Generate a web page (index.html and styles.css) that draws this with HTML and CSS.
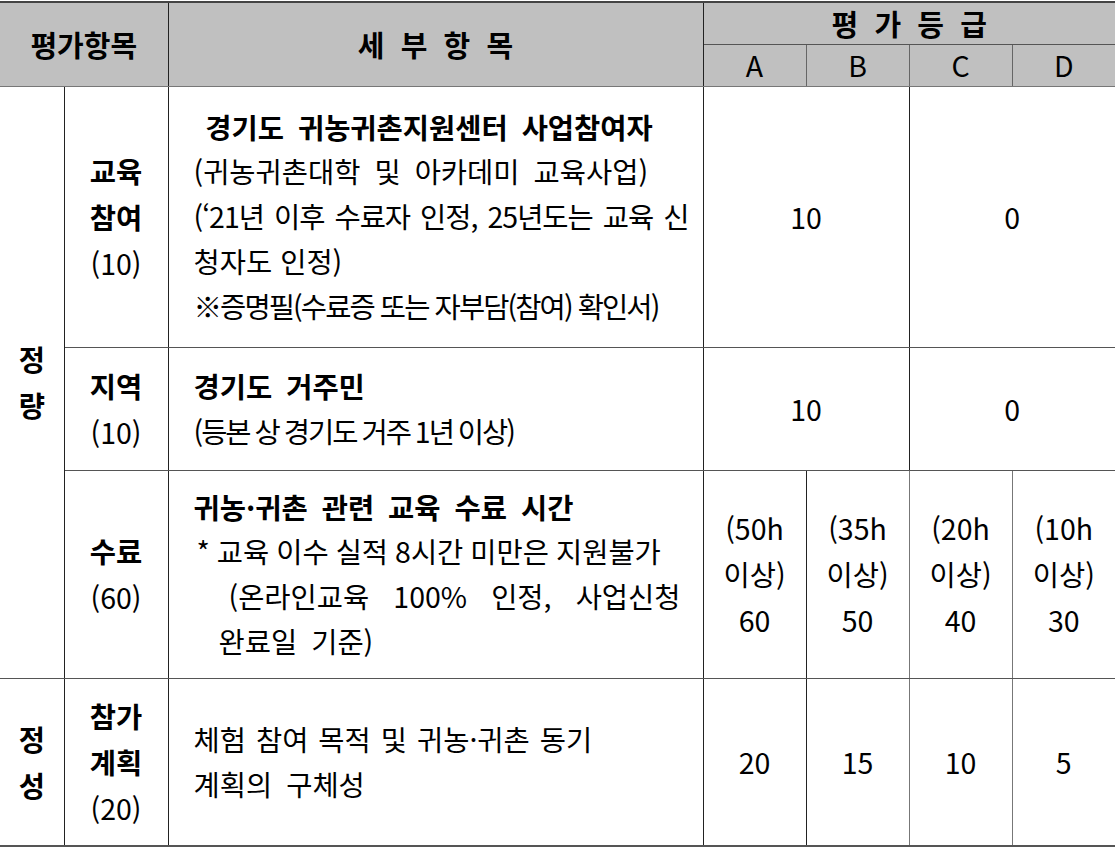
FILE: index.html
```html
<!DOCTYPE html>
<html lang="ko">
<head>
<meta charset="utf-8">
<link rel="stylesheet" href="styles.css">
</head>
<body>
<table class="grid">
  <colgroup>
    <col class="c1"><col class="c2"><col class="c3">
    <col class="cg"><col class="cg"><col class="cg"><col class="cg">
  </colgroup>
  <thead>
    <tr class="h1">
      <th colspan="2" rowspan="2" class="hd">평가항목</th>
      <th rowspan="2" class="hd sp">세 부 항 목</th>
      <th colspan="4" class="hd sp">평 가 등 급</th>
    </tr>
    <tr class="h2">
      <th class="hd g gl">A</th>
      <th class="hd g">B</th>
      <th class="hd g">C</th>
      <th class="hd g">D</th>
    </tr>
  </thead>
  <tbody>
    <tr class="r1">
      <td rowspan="3" class="cat"><div class="vt"><span>정</span><span>량</span></div></td>
      <td class="sub b">교육<br>참여<br><span class="n">(10)</span></td>
      <td class="desc">
        <div class="ln b ctr">경기도 귀농귀촌지원센터 사업참여자</div>
        <div class="ln ws1">(귀농귀촌대학 및 아카데미 교육사업)</div>
        <div class="ln just cond">(‘21년 이후 수료자 인정, 25년도는 교육 신</div>
        <div class="ln">청자도 인정)</div>
        <div class="ln cond2">※증명필(수료증 또는 자부담(참여) 확인서)</div>
      </td>
      <td colspan="2" class="val gl">10</td>
      <td colspan="2" class="val">0</td>
    </tr>
    <tr class="r2">
      <td class="sub b">지역<br><span class="n">(10)</span></td>
      <td class="desc">
        <div class="ln b ws1">경기도 거주민</div>
        <div class="ln tight">(등본 상 경기도 거주 1년 이상)</div>
      </td>
      <td colspan="2" class="val gl">10</td>
      <td colspan="2" class="val">0</td>
    </tr>
    <tr class="r3">
      <td class="sub b">수료<br><span class="n">(60)</span></td>
      <td class="desc">
        <div class="ln b ws1">귀농·귀촌 관련 교육 수료 시간</div>
        <div class="ln star">* 교육 이수 실적 8시간 미만은 지원불가</div>
        <div class="ln ind1 just">(온라인교육 100% 인정, 사업신청</div>
        <div class="ln ind2 ws1">완료일 기준)</div>
      </td>
      <td class="val gl">(50h<br>이상)<br>60</td>
      <td class="val gray">(35h<br>이상)<br>50</td>
      <td class="val gray">(20h<br>이상)<br>40</td>
      <td class="val">(10h<br>이상)<br>30</td>
    </tr>
    <tr class="r4">
      <td class="cat"><div class="vt"><span>정</span><span>성</span></div></td>
      <td class="sub b">참가<br>계획<br><span class="n">(20)</span></td>
      <td class="desc">
        <div class="ln ws2">체험 참여 목적 및 귀농·귀촌 동기</div>
        <div class="ln ws1">계획의 구체성</div>
      </td>
      <td class="val gl">20</td>
      <td class="val gray">15</td>
      <td class="val gray">10</td>
      <td class="val">5</td>
    </tr>
  </tbody>
</table>
</body>
</html>
```

FILE: styles.css
```css
html, body {
  margin: 0;
  padding: 0;
  background: #ffffff;
}
body {
  font-family: "Noto Sans CJK KR", "Noto Sans", sans-serif;
  color: #000;
  padding-top: 1px;
}
.grid {
  border-collapse: collapse;
  table-layout: fixed;
  width: 1115px;
  font-size: 28.5px;
}
.c1 { width: 64px; }
.c2 { width: 104px; }
.c3 { width: 535px; }
.cg { width: 103px; }

th, td {
  padding: 0;
  border: 1px solid #555;
  border-left: 1px solid #222;
  border-right: 1px solid #222;
  vertical-align: middle;
  text-align: center;
  line-height: 45px;
}
tr > :first-child { border-left: none; }
tr > :last-child { border-right: none; }
thead tr.h1 th { border-top: 2px solid #444; }

.hd {
  background: #c0c0c0;
  font-weight: 700;
  font-size: 29px;
  line-height: 40px;
}
.h1 { height: 42px; }
.h2 { height: 42px; }
.hd.sp { letter-spacing: 0.14em; text-indent: 0.14em; }
.hd.g {
  font-weight: 400;
  font-size: 28.5px;
  line-height: 38px;
  border-left: 1px solid #666;
  border-right: 1px solid #666;
  border-top: 1px solid #222;
  border-bottom: 1px solid #777;
}
.hd.g.gl { border-left: 1px solid #222; }
.hd.g:last-child { border-right: none; }
thead th[rowspan] { border-bottom: 1px solid #777; }

.r1 { height: 261px; }
.r2 { height: 123px; }
.r3 { height: 208px; }
.r4 { height: 168px; }
.r4 td { border-bottom: 2px solid #555; }

.b { font-weight: 700; }
.n { font-weight: 400; }

.cat { font-weight: 700; }
.vt {
  display: flex;
  flex-direction: column;
  align-items: center;
  line-height: 46px;
}

.sub { line-height: 46px; }

.desc {
  text-align: left;
  padding: 0 14px 0 25px;
  line-height: 44.7px;
}
.ln { white-space: nowrap; }
.ctr { text-align: center; padding-right: 24px; word-spacing: 6px; }
.just { text-align: justify; text-align-last: justify; }
.cond { letter-spacing: -1px; }
.cond2 { letter-spacing: -1.9px; word-spacing: 0; }
.ws1 { word-spacing: 6px; }
.ws2 { word-spacing: 2px; }
.tight { letter-spacing: -2px; word-spacing: -1px; }
.star { padding-left: 3px; word-spacing: -1px; }
.ind1 { padding-left: 35px; padding-right: 8px; }
.ind2 { padding-left: 25px; }

.val {
  line-height: 46px;
}
.val.gray { border-left: 1px solid #777; border-right: 1px solid #777; }
.r3 .val, .r4 .val { border-left-color: #777; }
.val.gl { border-left: 1px solid #222; }
```
